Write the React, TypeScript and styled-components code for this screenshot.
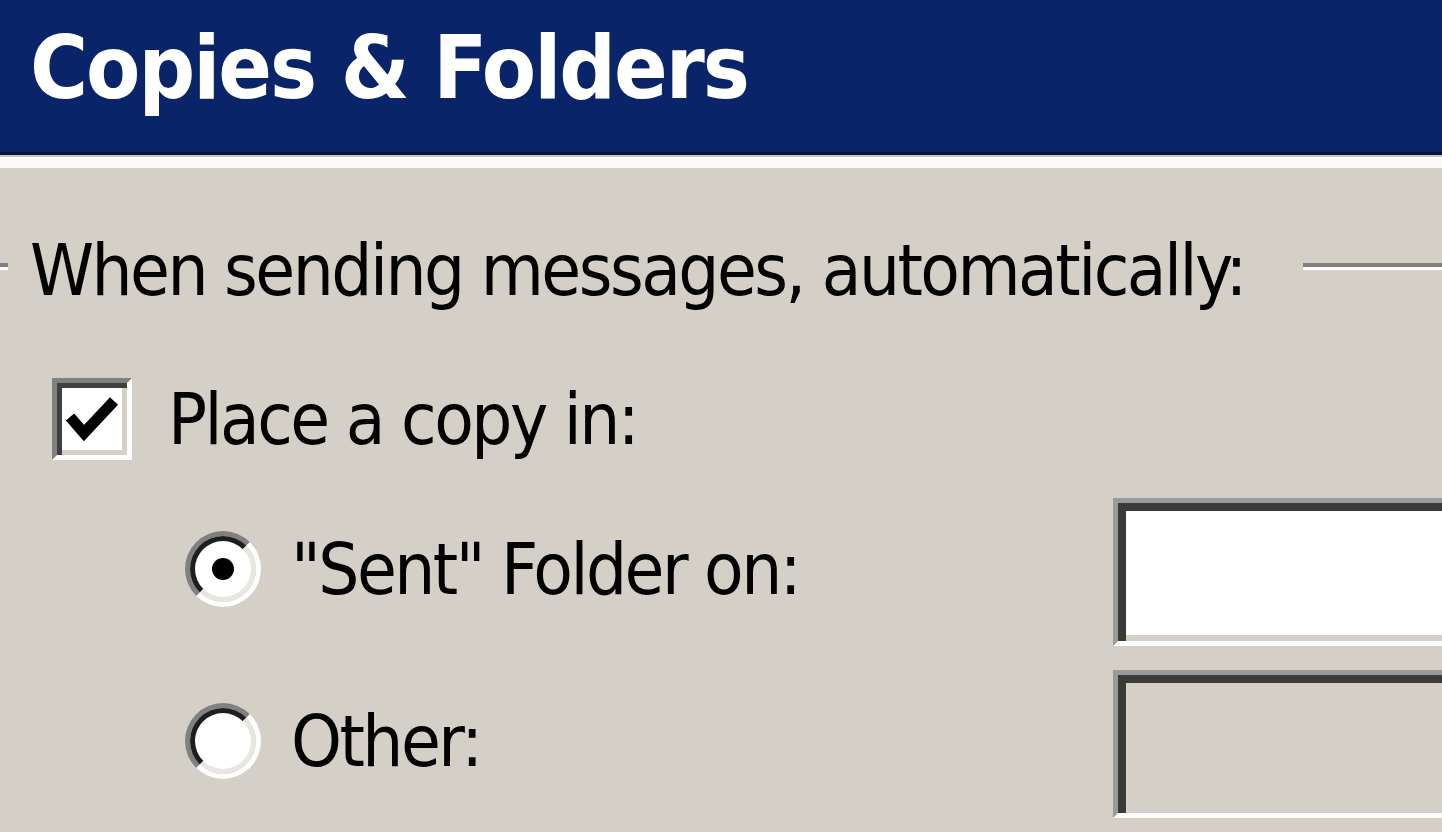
import React from "react";
import styled, { createGlobalStyle } from "styled-components";

const GlobalStyle = createGlobalStyle`
  html, body {
    margin: 0;
    padding: 0;
    background: #d4d0c8;
    overflow: hidden;
  }
  #root {
    width: 1442px;
    height: 832px;
    overflow: hidden;
  }
`;

const Dialog = styled.div`
  width: 1442px;
  height: 832px;
  display: flex;
  flex-direction: column;
  background: #d4d0c8;
  font-family: "DejaVu Sans Condensed", "DejaVu Sans", Verdana, sans-serif;
  font-stretch: condensed;
  color: #000;
  overflow: hidden;
`;

const TitleBar = styled.div`
  height: 155px;
  box-sizing: border-box;
  padding: 24px 0 0 30px;
  background: #0a246a;
  border-bottom: 3px solid #06143c;
`;

const Title = styled.h1`
  margin: 0;
  font-size: 88px;
  line-height: 1;
  font-weight: bold;
  color: #fff;
  letter-spacing: -2px;
`;

const TitleRule = styled.div`
  height: 11px;
  background: #fbfaf6;
  border-top: 2px solid #c8c6c0;
`;

const Body = styled.div`
  display: flex;
  flex-direction: column;
  padding-top: 66px;
`;

const GroupLegend = styled.div`
  display: flex;
  align-items: center;
  gap: 22px;
`;

const Groove = styled.span<{ grow?: boolean }>`
  display: block;
  height: 4px;
  width: ${(p) => (p.grow ? "auto" : "8px")};
  flex: ${(p) => (p.grow ? "1" : "none")};
  margin-left: ${(p) => (p.grow ? "36px" : "0")};
  margin-bottom: 8px;
  background: #808080;
  border-bottom: 3px solid #fff;
`;

const Label = styled.span`
  font-size: 72px;
  line-height: 1;
  white-space: nowrap;
  letter-spacing: -2.5px;
`;

const CheckRow = styled.label`
  display: flex;
  align-items: center;
  gap: 36px;
  margin: 72px 0 0 52px;
`;

const CheckBox = styled.span`
  width: 80px;
  height: 82px;
  box-sizing: border-box;
  display: flex;
  align-items: center;
  justify-content: center;
  background: #fff;
  border: 5px solid;
  border-color: #808080 #fff #fff #808080;
  box-shadow: inset 5px 5px 0 #404040, inset -5px -5px 0 #d4d0c8;
`;

const RadioRow = styled.div`
  display: grid;
  grid-template-columns: 928px 1fr;
  align-items: center;
  height: 150px;
  padding-left: 185px;
  & + & {
    margin-top: 22px;
  }
`;

const RadioOption = styled.label`
  display: flex;
  align-items: center;
  gap: 30px;
`;

const Radio = styled.span`
  width: 76px;
  height: 76px;
  box-sizing: border-box;
  border-radius: 50%;
  border: 5px solid;
  border-color: #808080 #fff #fff #808080;
  display: flex;
  align-items: center;
  justify-content: center;
`;

const RadioInner = styled.span`
  width: 100%;
  height: 100%;
  box-sizing: border-box;
  border-radius: 50%;
  border: 5px solid;
  border-color: #1e1e1e #e8e6e1 #e8e6e1 #1e1e1e;
  background: #fff;
  display: flex;
  align-items: center;
  justify-content: center;
`;

const RadioDot = styled.span`
  width: 22px;
  height: 22px;
  border-radius: 50%;
  background: #000;
`;

const TextBox = styled.div<{ disabled?: boolean }>`
  width: 420px;
  height: 148px;
  margin-top: 6px;
  box-sizing: border-box;
  background: ${(p) => (p.disabled ? "#d4d0c8" : "#fff")};
  border: 5px solid;
  border-color: #9a9a9a #fff #fff #9a9a9a;
  box-shadow: inset 8px 8px 0 #3a3a3a, inset -6px -6px 0 #d4d0c8;
`;

export default function App() {
  return (
    <>
      <GlobalStyle />
      <Dialog>
        <TitleBar>
          <Title>Copies &amp; Folders</Title>
        </TitleBar>
        <TitleRule />
        <Body>
          <GroupLegend>
            <Groove />
            <Label>When sending messages, automatically:</Label>
            <Groove grow />
          </GroupLegend>

          <CheckRow>
            <CheckBox>
              <svg width="60" height="60" viewBox="0 0 60 60">
                <path d="M8 28 L22 44 L52 12" fill="none" stroke="#000" strokeWidth="11" />
              </svg>
            </CheckBox>
            <Label>Place a copy in:</Label>
          </CheckRow>

          <RadioRow style={{ marginTop: 32 }}>
            <RadioOption>
              <Radio>
                <RadioInner>
                  <RadioDot />
                </RadioInner>
              </Radio>
              <Label>"Sent" Folder on:</Label>
            </RadioOption>
            <TextBox />
          </RadioRow>

          <RadioRow>
            <RadioOption>
              <Radio>
                <RadioInner />
              </Radio>
              <Label>Other:</Label>
            </RadioOption>
            <TextBox disabled />
          </RadioRow>
        </Body>
      </Dialog>
    </>
  );
}
